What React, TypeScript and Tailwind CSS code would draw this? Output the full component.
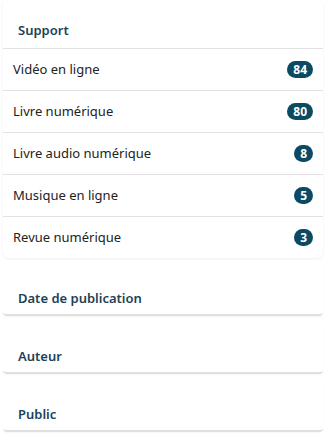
import React from "react";

const items = [
    { label: "Vidéo en ligne", count: 84 },
    { label: "Livre numérique", count: 80 },
    { label: "Livre audio numérique", count: 8 },
    { label: "Musique en ligne", count: 5 },
    { label: "Revue numérique", count: 3 },
];

const sections = ["Date de publication", "Auteur", "Public"];

function Badge({ count }: { count: number }) {
    return (
        <span className="flex h-[17px] min-w-[17px] items-center justify-center rounded-full bg-[#0b4a62] px-[6px] text-[12px] font-bold leading-none text-white">
            {count}
        </span>
    );
}

export default function App() {
    return (
        <div
            className="w-[335px] h-[448px] bg-white pt-[2px] pl-[3px] pr-[12px]"
            style={{ fontFamily: '"Noto Sans", "Open Sans", sans-serif' }}
        >
            <section className="rounded-b-[6px] bg-white shadow-[0_1px_3px_rgba(0,0,0,0.07)]">
                <h2 className="flex h-[46px] items-end pb-[8px] pl-[15px] text-[13px] font-semibold text-[#1d4257]">
                    Support
                </h2>
                <ul>
                    {items.map((item) => (
                        <li
                            key={item.label}
                            className="flex h-[42px] items-center justify-between border-t border-[#e2e2e2] pl-[10px] pr-[10px] text-[13px] text-[#222]"
                        >
                            <span>{item.label}</span>
                            <Badge count={item.count} />
                        </li>
                    ))}
                </ul>
            </section>
            {sections.map((title) => (
                <section
                    key={title}
                    className="mt-[4px] flex h-[54px] items-end rounded-b-[4px] border-b-2 border-[#e0e0e0] bg-white pb-[6px] pl-[15px] shadow-[0_1px_2px_rgba(0,0,0,0.04)]"
                >
                    <h2 className="text-[13px] font-semibold text-[#1d4257]">{title}</h2>
                </section>
            ))}
        </div>
    );
}
